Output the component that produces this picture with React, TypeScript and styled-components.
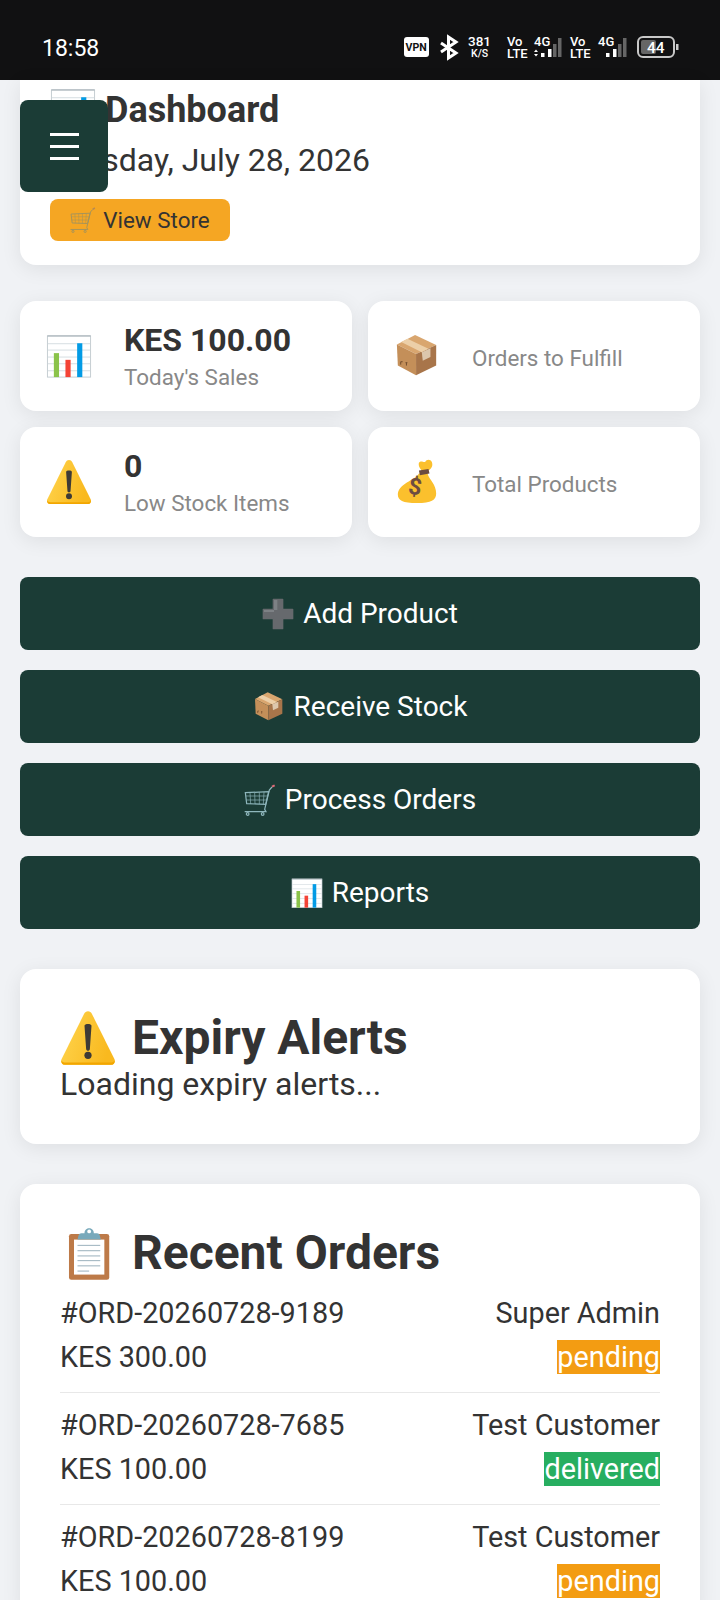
import React from "react";
import styled, { createGlobalStyle } from "styled-components";

const Global = createGlobalStyle`
  html, body { margin: 0; padding: 0; background: #f0f2f5; }
  body { font-family: Roboto, "Liberation Sans", sans-serif; color: #333; }
  * { box-sizing: border-box; }
`;

const Screen = styled.div`
  width: 720px;
  height: 1600px;
  overflow: hidden;
  position: relative;
  background: #f0f2f5;
`;

const StatusBar = styled.header`
  height: 80px;
  background: #111112;
  color: #fff;
  display: flex;
  align-items: center;
  justify-content: space-between;
  padding: 16px 41px 0 42px;
`;

const Clock = styled.span`
  font-size: 23px;
  font-weight: 400;
`;

const StatusIcons = styled.svg`
  display: block;
`;

const StatusText = styled.text<{ $size?: number; $dark?: boolean }>`
  font-family: Roboto, sans-serif;
  font-weight: ${(p) => (p.$dark ? 700 : 500)};
  font-size: ${(p) => p.$size ?? 12}px;
  fill: ${(p) => (p.$dark ? "#111" : "#fff")};
`;

const Content = styled.main`
  padding: 0 20px;
`;

const HeaderCard = styled.section`
  background: #fff;
  border-radius: 0 0 16px 16px;
  box-shadow: 0 4px 20px rgba(0, 0, 0, 0.08);
  height: 185px;
  padding: 7px 30px 0;
  overflow: hidden;
`;

const PageTitle = styled.h1`
  margin: 0;
  font-size: 36px;
  line-height: 42px;
  font-weight: 700;
  color: #333;
  display: flex;
  align-items: center;
  gap: 9px;
  white-space: nowrap;
`;

const DateLine = styled.p`
  margin: 9px 0 0;
  font-size: 32px;
  line-height: 37px;
  color: #333;
  white-space: nowrap;
`;

const StoreLink = styled.a`
  margin-top: 20px;
  width: 180px;
  height: 42px;
  border-radius: 8px;
  background: #f5a623;
  color: #333;
  font-size: 22.4px;
  display: flex;
  align-items: center;
  justify-content: center;
  gap: 7px;
`;

const MenuButton = styled.button`
  position: absolute;
  left: 20px;
  top: 100px;
  width: 88px;
  height: 92px;
  border: 0;
  border-radius: 8px;
  background: #1b3c36;
  color: #fff;
  padding: 0;
  display: flex;
  flex-direction: column;
  align-items: center;
  justify-content: center;
  gap: 9px;
`;

const MenuBar = styled.span`
  width: 29px;
  height: 3px;
  background: #fff;
`;

const StatGrid = styled.section`
  margin-top: 36px;
  display: grid;
  grid-template-columns: 1fr 1fr;
  gap: 16px;
`;

const StatCard = styled.div`
  height: 110px;
  background: #fff;
  border-radius: 16px;
  box-shadow: 0 4px 20px rgba(0, 0, 0, 0.08);
  padding: 0 26px;
  display: flex;
  align-items: center;
  gap: 32px;
`;

const StatInfo = styled.div`
  display: flex;
  flex-direction: column;
  gap: 1px;
`;

const StatValue = styled.div`
  font-size: 32px;
  line-height: 37px;
  font-weight: 700;
  color: #333;
`;

const StatLabel = styled.div`
  font-size: 22.4px;
  line-height: 26px;
  margin-top: 4px;
  color: #888;
`;

const Actions = styled.nav`
  margin-top: 40px;
  display: flex;
  flex-direction: column;
  gap: 20px;
`;

const ActionButton = styled.button`
  height: 73px;
  border: 0;
  border-radius: 8px;
  background: #1b3c36;
  color: #fff;
  font-family: inherit;
  font-size: 28px;
  display: flex;
  align-items: center;
  justify-content: center;
  gap: 9px;
`;

const Panel = styled.section<{ $height?: number }>`
  background: #fff;
  border-radius: 16px;
  box-shadow: 0 4px 20px rgba(0, 0, 0, 0.08);
  margin-top: 40px;
  padding: 41px 40px 0;
  ${(p) => (p.$height ? `height: ${p.$height}px;` : "")}
`;

const PanelTitle = styled.h2`
  margin: 0;
  font-size: 48px;
  line-height: 56px;
  font-weight: 700;
  color: #333;
  display: flex;
  align-items: center;
  gap: 16px;
`;

const PanelText = styled.p`
  margin: 0;
  font-size: 32px;
  line-height: 37px;
  color: #333;
`;

const OrderRow = styled.div<{ $last?: boolean }>`
  display: grid;
  grid-template-columns: 1fr auto;
  justify-items: start;
  row-gap: 10px;
  font-size: 28.8px;
  line-height: 34px;
  color: #333;
  padding: 15px 0 18px;
  border-bottom: ${(p) => (p.$last ? "0" : "1px solid #e8e8e8")};
`;

const Customer = styled.span`
  justify-self: end;
`;

const Badge = styled.span<{ $color: string }>`
  justify-self: end;
  background: ${(p) => p.$color};
  color: #fff;
`;

const Chart = ({ size }: { size: number }) => (
  <svg width={size} height={size} viewBox="0 0 48 48">
    <rect x="1.5" y="3" width="45" height="43" fill="#fff" stroke="#c3ccd1" strokeWidth="1" />
    <rect x="1.5" y="2.5" width="45" height="1.2" fill="#aab4ba" />
    {[10.7, 17.3, 24.6, 31.6, 38.9].map((y) => <rect key={y} x="2" y={y} width="44" height="1" fill="#d5dde1" />)}
    <rect x="8.2" y="21" width="5.4" height="25" fill="#8bc34a" />
    <rect x="20.3" y="28" width="5.4" height="18" fill="#f44336" />
    <rect x="32.5" y="10.7" width="5.4" height="35.3" fill="#039be5" />
  </svg>
);

const Box = ({ size }: { size: number }) => (
  <svg width={size} height={size} viewBox="0 0 48 48">
    <path d="M22 2 L44 12.5 L23 22 L3 12Z" fill="#d9a66f" />
    <path d="M3 12 L23 22 V44 L4 34Z" fill="#c48f59" />
    <path d="M44 12.5 L23 22 V44 L44 34Z" fill="#a8754a" />
    <path d="M14 6 L36 16.5 L29 20 L7.5 9.5Z" fill="#eccfa8" />
    <path d="M29 20 L38 16 V25 L30 29Z" fill="#dcc7ad" />
    <path d="M7 30 H9 M7 30 V33 M12 31 H14 M13 31 V34" stroke="#6f4a2c" strokeWidth="1" fill="none" />
  </svg>
);

const Warning = ({ size }: { size: number }) => (
  <svg width={size} height={size} viewBox="0 0 48 48">
    <defs>
      <linearGradient id="warnFill" x1="0" y1="0" x2="1" y2="0.3">
        <stop offset="0" stopColor="#ffd54f" />
        <stop offset="1" stopColor="#f9b91f" />
      </linearGradient>
    </defs>
    <path d="M24 1 C25.6 1 26.6 1.8 27.4 3.4 L46.6 42 C47.8 44.6 46.4 47 43.8 47 H4.2 C1.6 47 0.2 44.6 1.4 42 L20.6 3.4 C21.4 1.8 22.4 1 24 1Z" fill="url(#warnFill)" />
    <path d="M1.2 43 C1 45.4 2.2 47 4.2 47 H43.8 C45.8 47 47 45.4 46.8 43 C46 44.6 45 45 43.4 45 H4.6 C3 45 2 44.6 1.2 43Z" fill="#f2a600" />
    <path d="M21 13.5 C21 11.5 27 11.5 27 13.5 L25.6 33.5 C25.5 35.5 22.5 35.5 22.4 33.5Z" fill="#3e3a36" />
    <circle cx="24" cy="38.8" r="3.1" fill="#3e3a36" />
  </svg>
);

const Bag = ({ size }: { size: number }) => (
  <svg width={size} height={size} viewBox="0 0 48 48">
    <path d="M26 15 C22 22 4 26 4 37 C4 43 9 46 24 46 C39 46 44 43 44 36 C44 26 37 22 35 15Z" fill="#fbc02d" />
    <path d="M26 4 C28 1 31 4 32.5 3 C34 0 38 0 39.5 3 C41 7 39 10 36 12 L29 13 C28 10 25 8 26 4Z" fill="#fbc02d" />
    <path d="M26 12 L36 10.5 L37 15 L27 17Z" fill="#6d4c41" />
    <text x="22" y="37" fontSize="24" fontWeight="700" fill="#6d4c41" textAnchor="middle" fontFamily="Roboto, sans-serif" transform="rotate(8 22 29)">$</text>
  </svg>
);

const Plus = ({ size }: { size: number }) => (
  <svg width={size} height={size} viewBox="0 0 48 48">
    <path d="M17 2 H31 V17 H46 V31 H31 V46 H17 V31 H2 V17 H17Z" fill="#66696d" stroke="#66696d" strokeWidth="2" strokeLinejoin="round" />
    <path d="M18 3 H23 V18 H3 V21 H18Z" fill="#7d8185" />
  </svg>
);

const Cart = ({ size, stroke = "#8fb7bd", tip = "#e06b78" }: { size: number; stroke?: string; tip?: string }) => (
  <svg width={size} height={size} viewBox="0 0 48 48" fill="none" stroke={stroke} strokeWidth="1.8">
    <path d="M42 4.5 L38 9 L31 38 L33 41.5 H1" />
    <path d="M2 13 L37 11.5 L32.5 30.5 L4 29.5Z" />
    <path d="M9 13 L10 30 M16 13 L16.5 30 M23 12.5 L23 30 M30 12 L29 30 M3 18 H35.5 M3.5 24 H34" strokeWidth="1" />
    <circle cx="5.5" cy="45" r="2" />
    <circle cx="28" cy="45" r="2" />
    <path d="M42 4 L46 2" stroke={tip} strokeWidth="3" />
  </svg>
);

const Clipboard = ({ size }: { size: number }) => (
  <svg width={size} height={size} viewBox="0 0 48 48">
    <rect x="7.7" y="7.7" width="34.5" height="39.3" rx="2" fill="#bd7a48" />
    <rect x="12" y="12.5" width="26" height="30" fill="#fff" />
    {[17, 21.5, 26, 30, 34.5, 39].map((y) => <rect key={y} x="15" y={y} width={y === 39 ? 10 : 19.5} height="1" fill="#a9bcc6" />)}
    <path d="M15 12.5 L16 8.5 C16.5 7 18 7 19.5 7 H21 C21 1.5 29 1.5 29 7 H30.5 C32 7 33.5 7 34 8.5 L35 12.5Z" fill="#78a9bb" />
    <circle cx="25" cy="5.5" r="1.6" fill="#fff" />
  </svg>
);

const SignalBars = ({ x }: { x: number }) => (
  <>
    <rect x={x} y="21" width="3.5" height="4" fill="#fff" />
    <rect x={x + 7} y="17" width="3.5" height="8" fill="#fff" />
    <rect x={x + 12} y="12" width="3.5" height="13" fill="#666" />
    <rect x={x + 17} y="6" width="3.5" height="19" fill="#666" />
  </>
);

const StatusGlyphs = () => (
  <StatusIcons width="275" height="32" viewBox="0 0 275 32">
    <rect x="0" y="5" width="25" height="20" rx="3" fill="#fff" />
    <StatusText x="1.6" y="19.4" $size={10.6} $dark>VPN</StatusText>
    <path d="M37 11 L52 21 L44.5 26 V5 L52 10 L37 20" fill="none" stroke="#fff" strokeWidth="3" />
    <StatusText x="64" y="13.5" $size={13.5}>381</StatusText>
    <StatusText x="67" y="25" $size={10.5}>K/S</StatusText>
    <StatusText x="103" y="13.5" $size={13}>Vo</StatusText>
    <StatusText x="103" y="25.5" $size={13}>LTE</StatusText>
    <StatusText x="130" y="14" $size={13}>4G</StatusText>
    <path d="M130 20 L132 17.5 L134 20Z M130 22 L132 24.5 L134 22Z" fill="#fff" />
    <SignalBars x={137} />
    <StatusText x="166" y="13.5" $size={13}>Vo</StatusText>
    <StatusText x="166" y="25.5" $size={13}>LTE</StatusText>
    <StatusText x="194" y="14" $size={13}>4G</StatusText>
    <SignalBars x={202} />
    <rect x="234" y="5" width="36" height="20" rx="5" fill="none" stroke="#c8c8c8" strokeWidth="2" />
    <rect x="237" y="8" width="15" height="14" rx="2" fill="#666" />
    <StatusText x="243" y="20.5" $size={15.5}>44</StatusText>
    <rect x="272" y="12" width="2.5" height="6" fill="#ccc" />
  </StatusIcons>
);

const orders = [
  { id: "#ORD-20260728-9189", who: "Super Admin", total: "KES 300.00", status: "pending", color: "#f39c12" },
  { id: "#ORD-20260728-7685", who: "Test Customer", total: "KES 100.00", status: "delivered", color: "#27ae60" },
  { id: "#ORD-20260728-8199", who: "Test Customer", total: "KES 100.00", status: "pending", color: "#f39c12" },
];

export default function App() {
  return (
    <Screen>
      <Global />
      <StatusBar>
        <Clock>18:58</Clock>
        <StatusGlyphs />
      </StatusBar>
      <Content>
        <HeaderCard>
          <PageTitle><Chart size={46} />Dashboard</PageTitle>
          <DateLine>Tuesday, July 28, 2026</DateLine>
          <StoreLink><Cart size={26} stroke="#a4935c" tip="#b98a50" />View Store</StoreLink>
        </HeaderCard>
        <StatGrid>
          <StatCard><Chart size={46} /><StatInfo><StatValue>KES 100.00</StatValue><StatLabel>Today's Sales</StatLabel></StatInfo></StatCard>
          <StatCard><Box size={46} /><StatInfo><StatLabel>Orders to Fulfill</StatLabel></StatInfo></StatCard>
          <StatCard><Warning size={46} /><StatInfo><StatValue>0</StatValue><StatLabel>Low Stock Items</StatLabel></StatInfo></StatCard>
          <StatCard><Bag size={46} /><StatInfo><StatLabel>Total Products</StatLabel></StatInfo></StatCard>
        </StatGrid>
        <Actions>
          <ActionButton><Plus size={32} />Add Product</ActionButton>
          <ActionButton><Box size={32} />Receive Stock</ActionButton>
          <ActionButton><Cart size={32} />Process Orders</ActionButton>
          <ActionButton><Chart size={32} />Reports</ActionButton>
        </Actions>
        <Panel $height={175}>
          <PanelTitle><Warning size={56} />Expiry Alerts</PanelTitle>
          <PanelText>Loading expiry alerts...</PanelText>
        </Panel>
        <Panel>
          <PanelTitle><Clipboard size={56} />Recent Orders</PanelTitle>
          {orders.map((o, i) => (
            <OrderRow key={o.id} $last={i === orders.length - 1}>
              <span>{o.id}</span>
              <Customer>{o.who}</Customer>
              <span>{o.total}</span>
              <Badge $color={o.color}>{o.status}</Badge>
            </OrderRow>
          ))}
        </Panel>
      </Content>
      <MenuButton aria-label="Menu"><MenuBar /><MenuBar /><MenuBar /></MenuButton>
    </Screen>
  );
}
